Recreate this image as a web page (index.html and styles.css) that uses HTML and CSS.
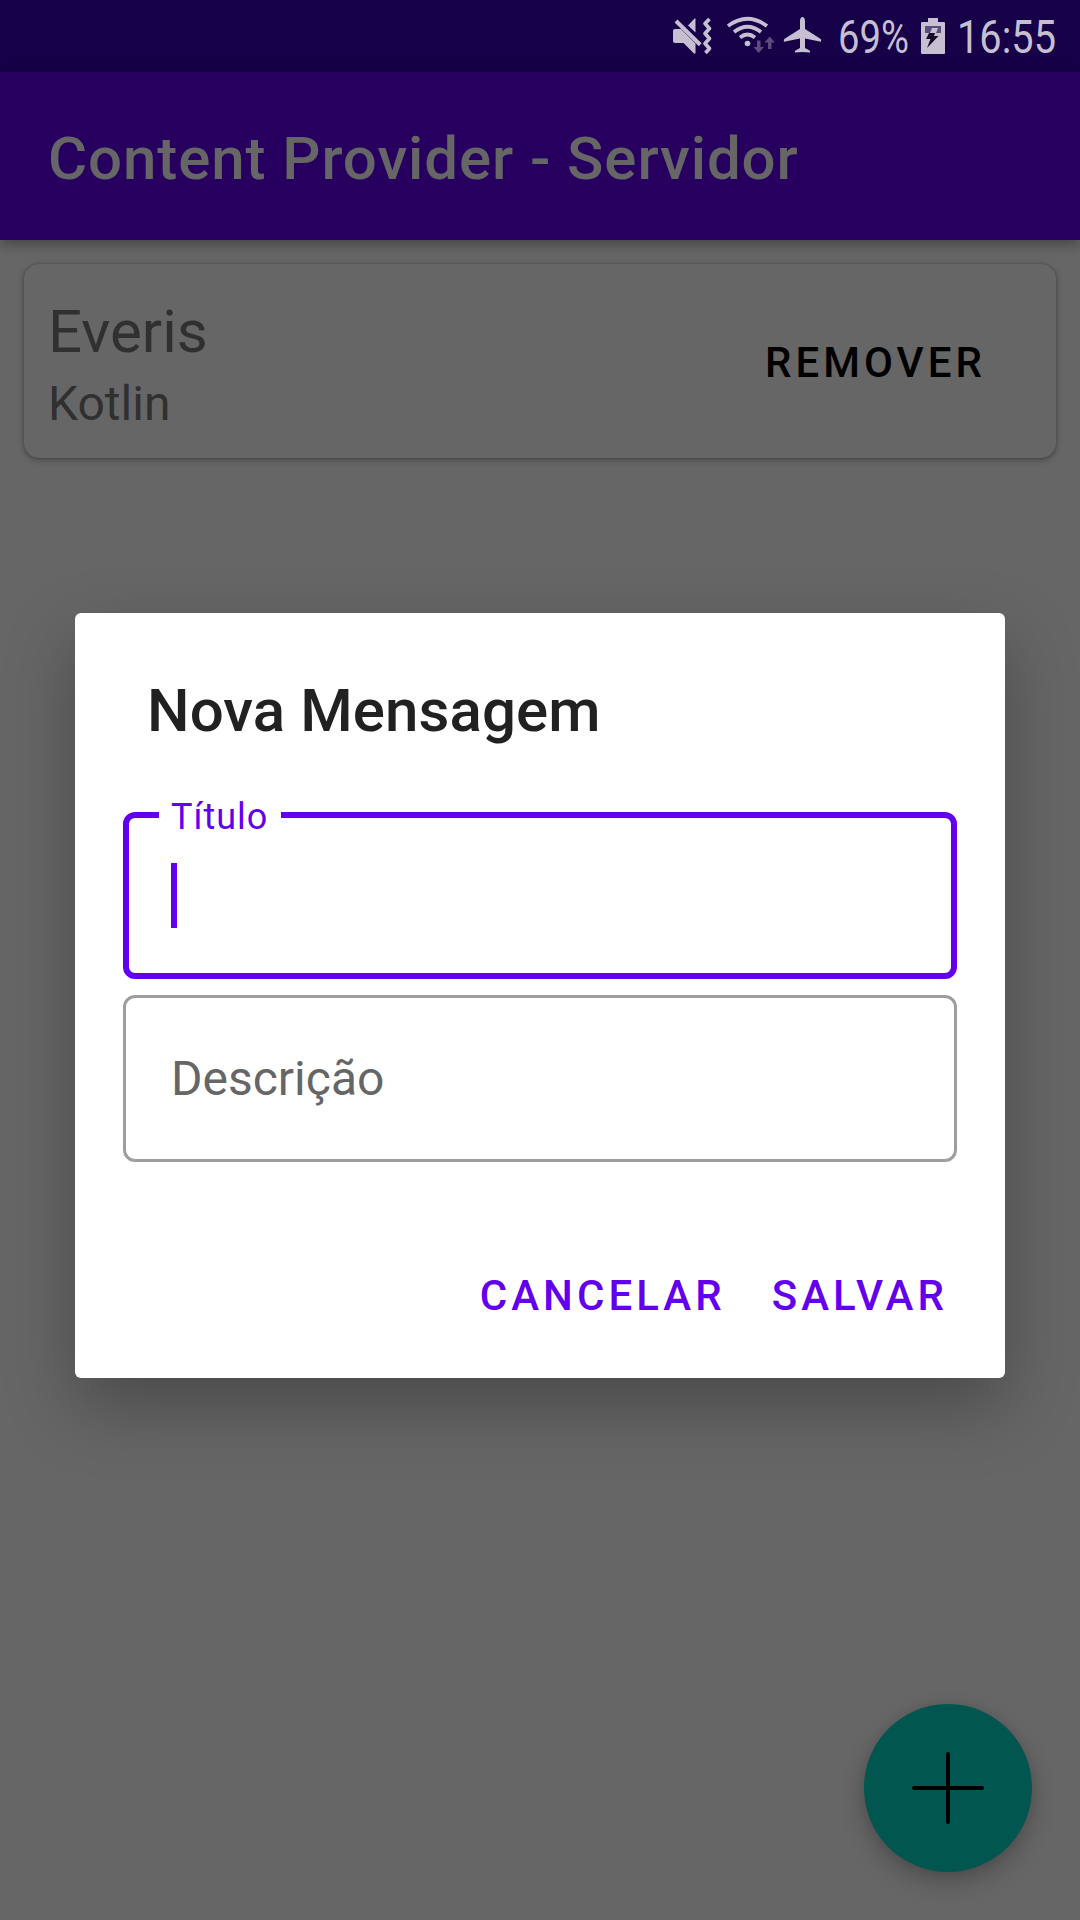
FILE: index.html
```html
<!DOCTYPE html>
<html lang="pt-BR">
<head>
<meta charset="utf-8">
<title>Content Provider - Servidor</title>
<link rel="stylesheet" href="styles.css">
</head>
<body>
<div class="screen">
  <div class="status-bar">
    <svg class="status-icon mute" width="42" height="72" viewBox="12 0 42 72">
      <path d="M15 29h6l14.500 14.500V53.500h-1.500L23.500 43H15a2 2 0 0 1-2-2V31a2 2 0 0 1 2-2z"/>
      <path d="M28 25.500 34.500 18.500h1V32.500z"/>
      <path class="line slash" d="M16 21 40.200 44.700"/>
      <path class="line zigzag" d="M49.500 19l-4.500 4.500 4.500 5-4.500 5 4.500 5-4.500 5 4.500 5-4 4.500"/>
    </svg>
    <svg class="status-icon wifi" width="50" height="72" viewBox="66 0 50 72">
      <path class="line" d="M68 26Q87.500 11.500 107 26M74 32Q87.500 21.500 101 32M80 37.500Q87.500 31.500 95 37.500"/>
      <circle cx="87.500" cy="43.500" r="2.800"/>
      <path class="traffic" d="M97 40.500h3.500v6.500h3.500L98.700 53 93.500 47H97zM108 49v-6.500h-3.500l5.200-6 5.300 6h-3.500V49z"/>
    </svg>
    <svg class="status-icon plane" width="40" height="72" viewBox="123 0 40 72">
      <path d="M142.500 17c1.600 0 2.500 1.800 2.500 4v8l15 9.500c1 .7 1.400 1.800 1 3.300L145 38.500V48l4.500 2.500c.8.500.8 1 .5 2l-7.500-.5-7.500.5c-.3-1-.3-1.500.5-2L140 48v-9.500L124 41.800c-.4-1.500 0-2.600 1-3.300l15-9.500v-8c0-2.200.9-4 2.500-4z"/>
    </svg>
    <svg class="status-text percent" width="74" height="72"><text x="2" y="53" textLength="71" lengthAdjust="spacingAndGlyphs">69%</text></svg>
    <svg class="status-icon battery" width="26" height="72" viewBox="100 0 26 72">
      <path d="M108 18h10v4h6a1 1 0 0 1 1 1v30a1 1 0 0 1-1 1h-22a1 1 0 0 1-1-1V23a1 1 0 0 1 1-1h6z"/>
      <path class="drained" d="M105 26h16v7h-16z"/>
      <path d="M112 28h6l-2 5h-6z"/>
      <path class="bolt" d="M109 33h6l-1 3h4.500L107 48l3.500-9H106z"/>
    </svg>
    <svg class="status-text clock" width="102" height="72"><text x="1" y="53" textLength="99" lengthAdjust="spacingAndGlyphs">16:55</text></svg>
  </div>

  <header class="app-bar">
    <h1 class="app-title">Content Provider - Servidor</h1>
  </header>

  <main class="content">
    <article class="card">
      <div class="card-text">
        <div class="card-title">Everis</div>
        <div class="card-description">Kotlin</div>
      </div>
      <button class="remove">REMOVER</button>
    </article>
  </main>

  <button class="fab" aria-label="Adicionar">
    <svg width="72" height="72" viewBox="0 0 72 72"><path d="M36 2v68M2 36h68"/></svg>
  </button>

  <section class="dialog" role="dialog">
    <h2 class="dialog-title">Nova Mensagem</h2>
    <div class="field focused">
      <span class="field-label">Título</span>
      <span class="caret"></span>
    </div>
    <div class="field">
      <span class="field-hint">Descrição</span>
    </div>
    <div class="actions">
      <button class="action">CANCELAR</button>
      <button class="action">SALVAR</button>
    </div>
  </section>
</div>
</body>
</html>
```
FILE: styles.css
```css
* { box-sizing: border-box; }

body {
  margin: 0;
  font-family: Roboto, "Liberation Sans", sans-serif;
}

button {
  margin: 0;
  padding: 0;
  border: 0;
  background: none;
  font-family: inherit;
  font-size: 42px;
  font-weight: 500;
  line-height: 48px;
  letter-spacing: 4.05px;
}

h1, h2 {
  margin: 0;
  font-size: 60px;
  font-weight: 500;
  line-height: 70px;
}

.screen {
  position: relative;
  width: 1080px;
  height: 1920px;
  overflow: hidden;
  background: #666;
}

/* Status bar */
.status-bar {
  display: flex;
  justify-content: flex-end;
  height: 72px;
  padding-right: 22px;
  background: #160047;
}

.status-bar svg {
  flex: none;
  overflow: visible;
}

.status-icon, .status-text { fill: #c5bfd1; }

.status-icon .line {
  fill: none;
  stroke: #c5bfd1;
  stroke-width: 3.7;
}

.status-icon .slash { stroke-width: 4; }

.status-icon .zigzag { stroke-linejoin: round; }

.status-icon .traffic { fill: #5c4d7e; }

.status-icon .drained { fill: #5c4d7e; }

.status-icon .bolt { fill: #160a2c; }

.mute { margin-right: 12px; }
.wifi { margin-right: 7px; }
.plane { margin-right: 13px; }
.percent { margin-right: 10px; }
.battery { margin-right: 10px; }

.status-text { font-size: 46px; }

/* App bar */
.app-bar {
  position: relative;
  height: 168px;
  padding: 52px 48px 0;
  background: #27005f;
  box-shadow: 0 5px 12px rgba(0, 0, 0, .3);
}

.app-title {
  color: #666;
  letter-spacing: .91px;
}

/* Message list */
.content { padding: 24px; }

.card {
  display: flex;
  justify-content: space-between;
  align-items: center;
  height: 194px;
  padding: 0 70px 0 24px;
  border-radius: 15px;
  background: #666;
  box-shadow: 0 2px 6px rgba(0, 0, 0, .3), 0 0 3px rgba(0, 0, 0, .2);
}

.card-text {
  display: grid;
  gap: 9px;
  padding-top: 6px;
  color: #303030;
}

.card-title {
  font-size: 60px;
  line-height: 70px;
}

.card-description {
  font-size: 48px;
  line-height: 56px;
}

.remove {
  padding-top: 3px;
  color: #000;
}

/* Floating action button */
.fab {
  position: absolute;
  right: 48px;
  bottom: 48px;
  display: grid;
  place-items: center;
  width: 168px;
  height: 168px;
  border-radius: 50%;
  background: #01574f;
  box-shadow: 0 10px 24px rgba(0, 0, 0, .24), 0 0 8px rgba(0, 0, 0, .08);
}

.fab path {
  stroke: #000;
  stroke-width: 4;
  stroke-linecap: round;
}

/* Dialog */
.dialog {
  position: absolute;
  top: 613px;
  left: 75px;
  width: 930px;
  height: 765px;
  padding: 63px 48px 0;
  border-radius: 6px;
  background: #fff;
  box-shadow: 0 28px 70px rgba(0, 0, 0, .28);
}

.dialog-title {
  margin-bottom: 66px;
  padding-left: 24px;
  color: #212121;
  letter-spacing: .1px;
}

.field {
  position: relative;
  display: flex;
  align-items: center;
  height: 167px;
  margin-bottom: 16px;
  padding-left: 45px;
  border: 3px solid #9e9e9e;
  border-radius: 12px;
}

.field.focused {
  padding-left: 42px;
  border: 6px solid #6200ee;
}

.field-label {
  position: absolute;
  top: -22px;
  left: 30px;
  width: 122px;
  padding-left: 12px;
  background: #fff;
  color: #6200ee;
  font-size: 36px;
  line-height: 42px;
  letter-spacing: 1px;
}

.caret {
  width: 6px;
  height: 65px;
  background: #6200ee;
}

.field-hint {
  color: #666;
  font-size: 48px;
  line-height: 56px;
}

.actions {
  display: flex;
  justify-content: flex-end;
  gap: 46px;
  padding: 94px 9px 0 0;
}

.action { color: #6200ee; }
```
